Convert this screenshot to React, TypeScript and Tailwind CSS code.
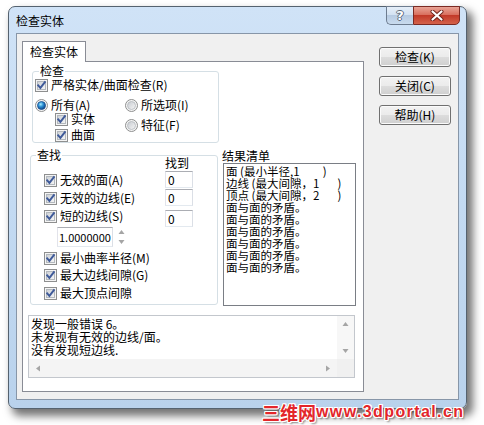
import React from "react";

const cjk = "font-['Noto_Sans_CJK_SC',sans-serif]";

function CheckBox({ checked = true }: { checked?: boolean }) {
  return (
    <svg width="13" height="13" viewBox="0 0 13 13" className="shrink-0">
      <defs>
        <linearGradient id="cbInner" x1="0" y1="0" x2="1" y2="1">
          <stop offset="0" stopColor="#cbcfd5" />
          <stop offset="1" stopColor="#f7f7f7" />
        </linearGradient>
      </defs>
      <rect x="0.5" y="0.5" width="12" height="12" fill="#f4f4f4" stroke="#8e8f8f" />
      <rect x="2.5" y="2.5" width="8" height="8" fill="url(#cbInner)" stroke="#b3b8bd" />
      {checked && (
        <path d="M3.2 6.3 L5.4 8.9 L9.9 3.1" fill="none" stroke="#3f5a99" strokeWidth="1.9" strokeLinecap="square" />
      )}
    </svg>
  );
}

function Radio({ on = false }: { on?: boolean }) {
  return (
    <svg width="13" height="13" viewBox="0 0 13 13" className="shrink-0">
      <defs>
        <radialGradient id="rdOn" cx="0.4" cy="0.35" r="0.7">
          <stop offset="0" stopColor="#a8ecff" />
          <stop offset="0.45" stopColor="#2a8fd4" />
          <stop offset="1" stopColor="#0b3a7c" />
        </radialGradient>
        <linearGradient id="rdOff" x1="0" y1="0" x2="1" y2="1">
          <stop offset="0" stopColor="#c6cad0" />
          <stop offset="1" stopColor="#f7f7f7" />
        </linearGradient>
      </defs>
      <circle cx="6.5" cy="6.5" r="6" fill="#f4f4f4" stroke="#8e8f8f" />
      <circle cx="6.5" cy="6.5" r="4" fill={on ? "url(#rdOn)" : "url(#rdOff)"} stroke={on ? "#1c4f8f" : "#b3b8bd"} strokeWidth="0.8" />
    </svg>
  );
}

function Tri({ dir }: { dir: "up" | "down" | "left" | "right" }) {
  const d = {
    up: "M0.5 5 L3.5 1 L6.5 5 Z",
    down: "M0.5 2 L3.5 6 L6.5 2 Z",
    left: "M5 0.5 L1 3.5 L5 6.5 Z",
    right: "M2 0.5 L6 3.5 L2 6.5 Z",
  }[dir];
  return (
    <svg width="7" height="7" viewBox="0 0 7 7">
      <path d={d} fill="#a5a5a5" />
    </svg>
  );
}

function Opt({ children, radio, on, className = "" }: { children: React.ReactNode; radio?: boolean; on?: boolean; className?: string }) {
  return (
    <div className={`h-[14px] flex items-center gap-[3px] text-[12px] leading-[14px] whitespace-nowrap ${className}`}>
      {radio ? <Radio on={on} /> : <CheckBox />}
      <span>{children}</span>
    </div>
  );
}

function Edit({ className = "" }: { className?: string }) {
  return (
    <div className={`w-[28px] h-[17px] border border-[#abadb3] border-b-[#e3e9ef] border-l-[#e2e3ea] border-r-[#dbdfe6] bg-white pl-[2px] text-[12px] leading-[15px] ${className}`}>
      0
    </div>
  );
}

function Btn({ children }: { children: React.ReactNode }) {
  return (
    <div className="w-[72px] h-[20px] rounded-[3px] border border-[#707070] bg-[linear-gradient(#f2f2f2,#ebebeb_50%,#dddddd_50%,#cfcfcf)] shadow-[inset_0_0_0_1px_#fbfbfb] flex items-center justify-center text-[12px] leading-[14px]">
      {children}
    </div>
  );
}

const results = [
  "面 (最小半径,1         )",
  "边线 (最大间隙，1       )",
  "顶点 (最大间隙，2       )",
  "面与面的矛盾。",
  "面与面的矛盾。",
  "面与面的矛盾。",
  "面与面的矛盾。",
  "面与面的矛盾。",
  "面与面的矛盾。",
];

export default function App() {
  return (
    <div className={`relative w-[484px] h-[425px] overflow-hidden bg-white pl-[8px] pt-[6px] text-black ${cjk}`}>
      <div className="w-[459px] h-[403px] rounded-[7px] border border-[#55626f] bg-gradient-to-b from-[#d0e3f7] via-[#c3daf2] to-[#b9d2ec] shadow-[5px_6px_9px_1px_rgba(0,0,0,0.55)] flex flex-col">
        {/* title bar */}
        <div className="h-[26px] shrink-0 flex items-start">
          <span className="ml-[7px] mt-[6px] text-[12px] leading-[16px]">检查实体</span>
          <div className="ml-auto mr-[6px] -mt-px flex">
            <div className="w-[27px] h-[19px] rounded-bl-[5px] border border-[#6d7c8f] border-r-0 bg-[linear-gradient(#e6eff9,#d3e2f2_45%,#b7cbe2_50%,#c9dbee)] flex items-center justify-center">
              <span className="font-['DejaVu_Sans',sans-serif] text-[13px] leading-[13px] font-bold text-white [text-shadow:1px_0_0_#5c6b7d,-1px_0_0_#5c6b7d,0_1px_0_#5c6b7d,0_-1px_0_#5c6b7d]">?</span>
            </div>
            <div className="w-[47px] h-[19px] rounded-br-[5px] border border-[#7b2a23] bg-[linear-gradient(#e9a496,#d9705f_45%,#c23a29_50%,#d4624a)] flex items-center justify-center">
              <svg width="14" height="11" viewBox="0 0 14 11">
                <path d="M2.5 1.5 L11.5 9.5 M11.5 1.5 L2.5 9.5" stroke="#6e2119" strokeWidth="4" strokeLinecap="round" />
                <path d="M2.5 1.5 L11.5 9.5 M11.5 1.5 L2.5 9.5" stroke="#ffffff" strokeWidth="2.2" strokeLinecap="round" />
              </svg>
            </div>
          </div>
        </div>

        {/* client area */}
        <div className="mx-[7px] h-[367px] border border-[#8796a8] bg-[#f0f0f0] flex">
          <div className="ml-[5px] mt-[7px] flex flex-col">
            <div className="relative z-10 -mb-px w-[64px] h-[21px] border border-b-0 border-[#898c95] bg-white flex items-center justify-center text-[12px] leading-[14px]">
              检查实体
            </div>
            <div className="w-[342px] h-[331px] border border-[#898c95] bg-white flex flex-col">
              {/* 检查 */}
              <fieldset className="ml-[9px] mt-[2px] w-[187px] h-[79px] rounded-[3px] border border-[#d5dfe5]">
                <legend className="ml-[6px] px-[1px] text-[12px] leading-[14px]">检查</legend>
                <Opt className="pl-[2px]">严格实体/曲面检查(R)</Opt>
                <div className="flex mt-[6px] pl-[2px]">
                  <div className="w-[90px] flex flex-col">
                    <Opt radio on>所有(A)</Opt>
                    <Opt className="pl-[20px]">实体</Opt>
                    <Opt className="pl-[20px] mt-[2px]">曲面</Opt>
                  </div>
                  <div className="flex flex-col">
                    <Opt radio>所选项(I)</Opt>
                    <Opt radio className="mt-[6px]">特征(F)</Opt>
                  </div>
                </div>
              </fieldset>

              <div className="flex mt-[5px]">
                {/* 查找 */}
                <fieldset className="ml-[7px] w-[188px] h-[157px] rounded-[3px] border border-[#d5dfe5]">
                  <legend className="ml-[5px] px-[1px] text-[12px] leading-[14px]">查找</legend>
                  <div className="flex">
                    <div className="w-[134px] pl-[13px] flex flex-col">
                      <Opt className="mt-[11px]">无效的面(A)</Opt>
                      <Opt className="mt-[4px]">无效的边线(E)</Opt>
                      <Opt className="mt-[4px]">短的边线(S)</Opt>
                      <div className="mt-[4px] ml-[13px] flex items-center">
                        <div className="w-[56px] h-[20px] border border-[#abadb3] border-b-[#e3e9ef] border-l-[#e2e3ea] border-r-[#dbdfe6] bg-white pl-[1px] text-[11px] leading-[18px]">
                          1.0000000
                        </div>
                        <div className="w-[16px] h-[20px] flex flex-col items-center justify-between py-[2px]">
                          <Tri dir="up" />
                          <Tri dir="down" />
                        </div>
                      </div>
                      <Opt className="mt-[4px]">最小曲率半径(M)</Opt>
                      <Opt className="mt-[3px]">最大边线间隙(G)</Opt>
                      <Opt className="mt-[4px]">最大顶点间隙</Opt>
                    </div>
                    <div className="flex flex-col">
                      <div className="-mt-[6px] h-[14px] text-[12px] leading-[14px]">找到</div>
                      <Edit className="mt-[1px]" />
                      <Edit className="mt-[1px]" />
                      <Edit className="mt-[4px]" />
                    </div>
                  </div>
                </fieldset>

                {/* 结果清单 */}
                <div className="ml-[4px] flex flex-col">
                  <div className="h-[15px] text-[12px] leading-[15px]">结果清单</div>
                  <div className="ml-[1px] w-[133px] h-[143px] border border-[#7a7e85] bg-white pl-[2px] pt-[1px] text-[11.5px] leading-[12px] whitespace-pre">
                    {results.map((r, i) => (
                      <div key={i} className="h-[12px]">{r}</div>
                    ))}
                  </div>
                </div>
              </div>

              {/* message log */}
              <div className="ml-[5px] mt-[9px] w-[327px] h-[63px] border border-[#c3c7cd] bg-white grid grid-cols-[308px_17px] grid-rows-[43px_18px]">
                <div className="pl-[2px] pt-[1px] text-[12px] leading-[13px] whitespace-nowrap">
                  <div>发现一般错误 6。</div>
                  <div>未发现有无效的边线/面。</div>
                  <div>没有发现短边线.</div>
                </div>
                <div className="bg-[#f7f7f7] flex flex-col items-center justify-between py-[5px]">
                  <Tri dir="up" />
                  <Tri dir="down" />
                </div>
                <div className="bg-[#f4f4f4] flex items-center justify-between px-[6px]">
                  <Tri dir="left" />
                  <Tri dir="right" />
                </div>
                <div className="bg-[#f0f0f0]" />
              </div>
            </div>
          </div>

          {/* buttons */}
          <div className="ml-auto mr-[7px] mt-[13px] flex flex-col gap-[9px]">
            <Btn>检查(K)</Btn>
            <Btn>关闭(C)</Btn>
            <Btn>帮助(H)</Btn>
          </div>
        </div>
      </div>

      {/* site watermark */}
      <div className="absolute left-[262px] top-[402px] flex items-center h-[20px] whitespace-nowrap text-[#e3262b] font-bold [text-shadow:1px_0_0_#fff,-1px_0_0_#fff,0_1px_0_#fff,0_-1px_0_#fff,1px_1px_0_#fff,-1px_-1px_0_#fff,1px_-1px_0_#fff,-1px_1px_0_#fff,2px_2px_2px_rgba(0,0,0,0.45)]">
        <span className="text-[18px] leading-[20px]">三维网</span>
        <span className="font-['Liberation_Sans',sans-serif] text-[16px] leading-[20px] tracking-[1.4px]">www.3dportal.cn</span>
      </div>
    </div>
  );
}
